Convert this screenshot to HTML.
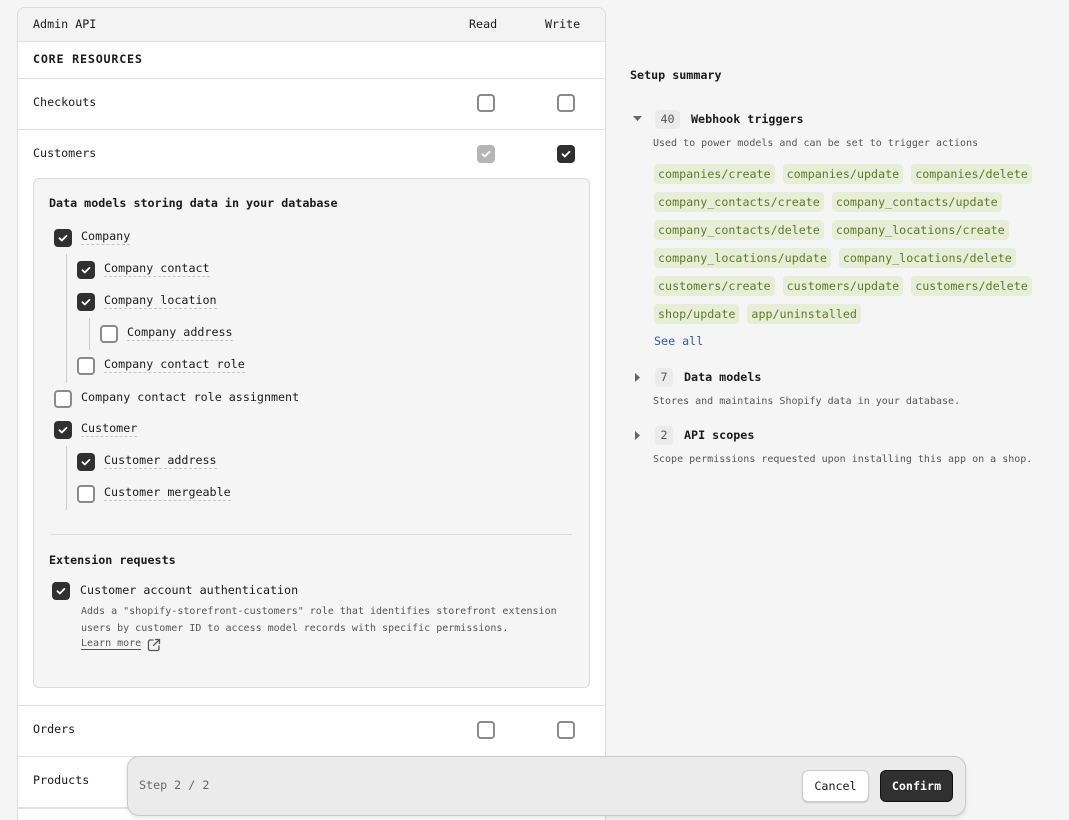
<!DOCTYPE html>
<html><head><meta charset="utf-8"><style>
*{box-sizing:border-box;margin:0;padding:0}
html{width:1069px;height:820px;overflow:hidden}
body{width:1069px;height:820px;overflow:hidden;background:#f5f5f5;font-family:"DejaVu Sans Mono","Liberation Mono",monospace;font-size:11.7px;color:#1a1a1a;position:relative}
.a{position:absolute;white-space:nowrap}
.card{position:absolute;left:17px;top:7px;width:589px;height:830px;background:#fff;border:1px solid #dcdcdc;border-radius:8px;overflow:hidden}
.hr{position:absolute;left:0;right:0;height:1px;background:#e3e3e3}
.cb{position:absolute;width:18px;height:18px;border:2px solid #8a8a8a;border-radius:4px;background:#fff}
.cb.on{background:#303030;border-color:#303030}
.cb.dis{background:#b5b5b5;border-color:#b5b5b5}
.cb svg{position:absolute;left:1px;top:1px}
.dl{border-bottom:1px dashed #c8c8c8;padding-bottom:1px}
.tag{display:inline-block;background:#e8edd8;color:#5c7a24;border-radius:4px;height:20px;line-height:20px;padding:0 4px;margin-right:8px;font-size:11.7px}
.trow{position:absolute;left:654px;white-space:nowrap}
.sm{font-size:10px;color:#555}
.badge{position:absolute;background:#ebebeb;border-radius:4px;height:19px;line-height:19px;text-align:center;color:#555;font-size:11.7px}
</style></head><body>

<div class="card">
  <div style="position:absolute;left:0;top:0;right:0;height:33px;background:#f3f3f3"></div>
  <div class="a" style="left:15px;top:9px">Admin API</div>
  <div class="a" style="left:451px;top:9px">Read</div>
  <div class="a" style="left:527px;top:9px">Write</div>
  <div class="hr" style="top:33px"></div>
  <div class="a" style="left:15px;top:44px;font-weight:bold;letter-spacing:0.8px">CORE RESOURCES</div>
  <div class="hr" style="top:70px"></div>
  <div class="a" style="left:15px;top:87px">Checkouts</div>
  <div class="cb" style="left:459px;top:86px"></div>
  <div class="cb" style="left:539px;top:86px"></div>
  <div class="hr" style="top:121px"></div>
  <div class="a" style="left:15px;top:138px">Customers</div>
  <div class="cb dis" style="left:459px;top:137px"><svg width="12" height="12" viewBox="0 0 12 12"><path d="M2.5 6.2l2.3 2.3 4.7-4.7" stroke="#fff" stroke-width="1.8" fill="none" stroke-linecap="round" stroke-linejoin="round"/></svg></div>
  <div class="cb on" style="left:539px;top:137px"><svg width="12" height="12" viewBox="0 0 12 12"><path d="M2.5 6.2l2.3 2.3 4.7-4.7" stroke="#fff" stroke-width="1.8" fill="none" stroke-linecap="round" stroke-linejoin="round"/></svg></div>
  <div style="position:absolute;left:15px;top:170px;width:557px;height:510px;background:#f5f5f5;border:1px solid #dcdcdc;border-radius:6px"></div>
  <div class="hr" style="top:697px"></div>
  <div class="a" style="left:15px;top:714px">Orders</div>
  <div class="cb" style="left:459px;top:713px"></div>
  <div class="cb" style="left:539px;top:713px"></div>
  <div class="hr" style="top:748px"></div>
  <div class="a" style="left:15px;top:765px">Products</div>
  <div class="hr" style="top:799px;height:2px"></div>
</div>

<div class="a" style="left:49px;top:196px;font-weight:bold">Data models storing data in your database</div>
<div style="position:absolute;left:66px;top:254px;width:1px;height:129px;background:#ccc"></div>
<div style="position:absolute;left:89px;top:318px;width:1px;height:32px;background:#ccc"></div>
<div style="position:absolute;left:66px;top:446px;width:1px;height:64px;background:#ccc"></div>

<div class="cb on" style="left:54px;top:229px"><svg width="12" height="12" viewBox="0 0 12 12"><path d="M2.5 6.2l2.3 2.3 4.7-4.7" stroke="#fff" stroke-width="1.8" fill="none" stroke-linecap="round" stroke-linejoin="round"/></svg></div>
<div class="a" style="left:81px;top:229px"><span class="dl">Company</span></div>
<div class="cb on" style="left:77px;top:261px"><svg width="12" height="12" viewBox="0 0 12 12"><path d="M2.5 6.2l2.3 2.3 4.7-4.7" stroke="#fff" stroke-width="1.8" fill="none" stroke-linecap="round" stroke-linejoin="round"/></svg></div>
<div class="a" style="left:104px;top:261px"><span class="dl">Company contact</span></div>
<div class="cb on" style="left:77px;top:293px"><svg width="12" height="12" viewBox="0 0 12 12"><path d="M2.5 6.2l2.3 2.3 4.7-4.7" stroke="#fff" stroke-width="1.8" fill="none" stroke-linecap="round" stroke-linejoin="round"/></svg></div>
<div class="a" style="left:104px;top:293px"><span class="dl">Company location</span></div>
<div class="cb" style="left:100px;top:325px"></div>
<div class="a" style="left:127px;top:325px"><span class="dl">Company address</span></div>
<div class="cb" style="left:77px;top:357px"></div>
<div class="a" style="left:104px;top:357px"><span class="dl">Company contact role</span></div>
<div class="cb" style="left:54px;top:390px"></div>
<div class="a" style="left:81px;top:390px">Company contact role assignment</div>
<div class="cb on" style="left:54px;top:421px"><svg width="12" height="12" viewBox="0 0 12 12"><path d="M2.5 6.2l2.3 2.3 4.7-4.7" stroke="#fff" stroke-width="1.8" fill="none" stroke-linecap="round" stroke-linejoin="round"/></svg></div>
<div class="a" style="left:81px;top:421px"><span class="dl">Customer</span></div>
<div class="cb on" style="left:77px;top:453px"><svg width="12" height="12" viewBox="0 0 12 12"><path d="M2.5 6.2l2.3 2.3 4.7-4.7" stroke="#fff" stroke-width="1.8" fill="none" stroke-linecap="round" stroke-linejoin="round"/></svg></div>
<div class="a" style="left:104px;top:453px"><span class="dl">Customer address</span></div>
<div class="cb" style="left:77px;top:485px"></div>
<div class="a" style="left:104px;top:485px"><span class="dl">Customer mergeable</span></div>

<div style="position:absolute;left:50px;top:534px;width:522px;height:1px;background:#dcdcdc"></div>
<div class="a" style="left:49px;top:553px;font-weight:bold">Extension requests</div>
<div class="cb on" style="left:52px;top:582px"><svg width="12" height="12" viewBox="0 0 12 12"><path d="M2.5 6.2l2.3 2.3 4.7-4.7" stroke="#fff" stroke-width="1.8" fill="none" stroke-linecap="round" stroke-linejoin="round"/></svg></div>
<div class="a" style="left:80px;top:583px">Customer account authentication</div>
<div class="a" style="left:81px;top:603px;font-size:10px;color:#555;line-height:17px">Adds a "shopify-storefront-customers" role that identifies storefront extension<br>users by customer ID to access model records with specific permissions.</div>
<div class="a" style="left:81px;top:638px;font-size:10px;color:#555"><span style="border-bottom:1px solid #555">Learn more</span></div>
<svg class="a" style="left:147px;top:638px" width="14" height="14" viewBox="0 0 14 14"><path d="M6 2H3a1.5 1.5 0 0 0-1.5 1.5v7.5A1.5 1.5 0 0 0 3 12.5h7.5A1.5 1.5 0 0 0 12 11V8M8.5 1.5h4v4M12.5 1.5L6.5 7.5" stroke="#555" stroke-width="1.3" fill="none" stroke-linecap="round" stroke-linejoin="round"/></svg>

<div class="a" style="left:630px;top:68px;font-weight:bold">Setup summary</div>
<svg class="a" style="left:633px;top:116px" width="10" height="6"><path d="M0 0h9L4.5 5z" fill="#666"/></svg>
<div class="badge" style="left:655px;top:110px;width:25px">40</div>
<div class="a" style="left:691px;top:112px;font-weight:bold">Webhook triggers</div>
<div class="a sm" style="left:653px;top:138px">Used to power models and can be set to trigger actions</div>
<div class="trow" style="top:164px"><span class="tag">companies/create</span><span class="tag">companies/update</span><span class="tag">companies/delete</span></div>
<div class="trow" style="top:192px"><span class="tag">company_contacts/create</span><span class="tag">company_contacts/update</span></div>
<div class="trow" style="top:220px"><span class="tag">company_contacts/delete</span><span class="tag">company_locations/create</span></div>
<div class="trow" style="top:248px"><span class="tag">company_locations/update</span><span class="tag">company_locations/delete</span></div>
<div class="trow" style="top:276px"><span class="tag">customers/create</span><span class="tag">customers/update</span><span class="tag">customers/delete</span></div>
<div class="trow" style="top:304px"><span class="tag">shop/update</span><span class="tag">app/uninstalled</span></div>
<div class="a" style="left:654px;top:334px;color:#2d5bc4">See all</div>

<svg class="a" style="left:635px;top:373px" width="6" height="10"><path d="M0 0v9l5-4.5z" fill="#666"/></svg>
<div class="badge" style="left:655px;top:368px;width:18px">7</div>
<div class="a" style="left:684px;top:370px;font-weight:bold">Data models</div>
<div class="a sm" style="left:653px;top:396px">Stores and maintains Shopify data in your database.</div>
<svg class="a" style="left:635px;top:431px" width="6" height="10"><path d="M0 0v9l5-4.5z" fill="#666"/></svg>
<div class="badge" style="left:655px;top:426px;width:18px">2</div>
<div class="a" style="left:684px;top:428px;font-weight:bold">API scopes</div>
<div class="a sm" style="left:653px;top:454px">Scope permissions requested upon installing this app on a shop.</div>

<div style="position:absolute;left:127px;top:756px;width:839px;height:60px;background:#ebebeb;border:1px solid #c9c9c9;border-radius:12px;box-shadow:0 2px 4px rgba(0,0,0,0.1)"></div>
<div class="a" style="left:139px;top:778px;color:#666">Step 2 / 2</div>
<div style="position:absolute;left:802px;top:770px;width:67px;height:32px;background:#fff;border:1px solid #ccc;border-radius:6px;box-shadow:0 1px 1px rgba(0,0,0,0.15);text-align:center;line-height:30px">Cancel</div>
<div style="position:absolute;left:880px;top:770px;width:73px;height:32px;background:#303030;border:1px solid #111;border-radius:6px;color:#fff;text-align:center;line-height:30px;font-weight:bold">Confirm</div>
</body></html>
